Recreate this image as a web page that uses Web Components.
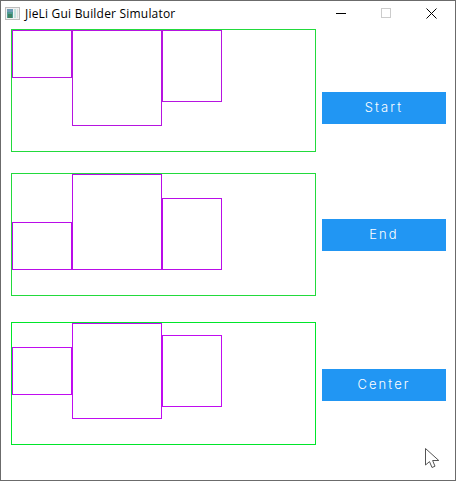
<!DOCTYPE html>
<html>
<head>
<meta charset="utf-8">
<title>JieLi Gui Builder Simulator</title>
<style>
    html, body { margin: 0; padding: 0; background: #fff; }
</style>
</head>
<body>
<sim-window caption="JieLi Gui Builder Simulator">
    <demo-row gap="0" offset="63" label="Start" align="flex-start" frame="#22da3c" item="#b614e0">
        <demo-box w="60" h="48"></demo-box>
        <demo-box w="90" h="96"></demo-box>
        <demo-box w="60" h="72"></demo-box>
    </demo-row>
    <demo-row gap="21" offset="46" label="End" align="flex-end" frame="#22da3c" item="#b90ce8">
        <demo-box w="60" h="48"></demo-box>
        <demo-box w="90" h="96"></demo-box>
        <demo-box w="60" h="72"></demo-box>
    </demo-row>
    <demo-row gap="26" offset="47" label="Center" align="center" frame="#00e62a" item="#c00cf0">
        <demo-box w="60" h="48"></demo-box>
        <demo-box w="90" h="96"></demo-box>
        <demo-box w="60" h="72"></demo-box>
    </demo-row>
</sim-window>

<script>
(function() {
    class TitleBar extends HTMLElement {
        connectedCallback() {
            this.attachShadow({ mode: 'open' });
            this.shadowRoot.innerHTML = `
            <style>
                :host {
                    display: flex;
                    align-items: center;
                    height: 28px;
                    font: 12px "Open Sans", "Noto Sans", sans-serif;
                    letter-spacing: 0.2px;
                    color: #000;
                }
                .icon { margin-left: 4px; flex: none; position: relative; top: -2px; }
                .caption { margin-left: 5px; flex: 1; white-space: nowrap; position: relative; top: -2px; }
                .controls { display: flex; margin-right: 18px; position: relative; top: -2px; }
                .controls svg { display: block; }
                .controls svg + svg { margin-left: 35px; }
            </style>
            <svg class="icon" width="15" height="13" viewBox="0 0 15 13">
                <rect x="0.5" y="0.5" width="14" height="12" fill="#f2f2f2" stroke="#bdbdbd"/>
                <rect x="2" y="2" width="6" height="9" fill="#4f9c94"/>
                <rect x="2" y="2" width="6" height="3" fill="#6f9ab4"/>
                <rect x="3" y="7" width="4" height="4" fill="#3f8263"/>
                <rect x="9" y="2" width="2" height="9" fill="#c4e2de"/>
                <rect x="12" y="2" width="1" height="9" fill="#dedede"/>
            </svg>
            <span class="caption"><slot></slot></span>
            <div class="controls">
                <svg width="10" height="10" viewBox="0 0 10 10"><path d="M0 5.5H10" stroke="#000" stroke-width="1"/></svg>
                <svg width="10" height="10" viewBox="0 0 10 10"><rect x="0.5" y="0.5" width="9" height="9" fill="none" stroke="#ccc"/></svg>
                <svg width="11" height="11" viewBox="0 0 11 11" style="margin-left:35px"><path d="M0.5 0.5L10.5 10.5M10.5 0.5L0.5 10.5" stroke="#000" stroke-width="1"/></svg>
            </div>`;
        }
    }

    class SimWindow extends HTMLElement {
        connectedCallback() {
            this.attachShadow({ mode: 'open' });
            this.shadowRoot.innerHTML = `
            <style>
                :host {
                    display: block;
                    position: relative;
                    box-sizing: border-box;
                    width: 456px;
                    height: 481px;
                    border: 1px solid #6b6b6b;
                    background: #fff;
                    overflow: hidden;
                }
                .cursor { position: absolute; left: 423px; top: 446px; }
            </style>
            <title-bar>${this.getAttribute('caption')}</title-bar>
            <slot></slot>
            <svg class="cursor" width="18" height="22" viewBox="0 0 18 22">
                <path d="M1.5 1.5V18L5.5 14.6L8 20.5L11 19.2L8.6 13.5H14.8Z" fill="#fff" stroke="#555" stroke-width="1" stroke-linejoin="round"/>
            </svg>`;
        }
    }

    class DemoRow extends HTMLElement {
        connectedCallback() {
            this.attachShadow({ mode: 'open' });
            this.shadowRoot.innerHTML = `
            <style>
                :host {
                    display: flex;
                    align-items: flex-start;
                    gap: 6px;
                    padding-left: 10px;
                    margin-top: ${this.getAttribute('gap')}px;
                    --item-color: ${this.getAttribute('item')};
                }
                .frame {
                    box-sizing: border-box;
                    display: flex;
                    flex-wrap: wrap;
                    align-content: flex-start;
                    align-items: ${this.getAttribute('align')};
                    width: 305px;
                    height: 123px;
                    border: 1px solid ${this.getAttribute('frame')};
                }
                sim-button { margin-top: ${this.getAttribute('offset')}px; }
            </style>
            <div class="frame"><slot></slot></div>
            <sim-button>${this.getAttribute('label')}</sim-button>`;
        }
    }

    class DemoBox extends HTMLElement {
        connectedCallback() {
            this.attachShadow({ mode: 'open' });
            this.shadowRoot.innerHTML = `
            <style>
                :host {
                    display: block;
                    box-sizing: border-box;
                    width: ${this.getAttribute('w')}px;
                    height: ${this.getAttribute('h')}px;
                    border: 1px solid var(--item-color);
                }
            </style>`;
        }
    }

    class SimButton extends HTMLElement {
        connectedCallback() {
            this.attachShadow({ mode: 'open' });
            this.shadowRoot.innerHTML = `
            <style>
                :host {
                    display: flex;
                    align-items: center;
                    justify-content: center;
                    box-sizing: border-box;
                    width: 124px;
                    height: 32px;
                    padding-bottom: 2px;
                    background: #2196f3;
                    color: #fff;
                    font: 300 13px Inter, "Open Sans", sans-serif;
                    letter-spacing: 2.1px;
                }
            </style>
            <slot></slot>`;
        }
    }

    window.customElements.define('title-bar', TitleBar);
    window.customElements.define('sim-button', SimButton);
    window.customElements.define('demo-box', DemoBox);
    window.customElements.define('demo-row', DemoRow);
    window.customElements.define('sim-window', SimWindow);
})();
</script>
</body>
</html>
